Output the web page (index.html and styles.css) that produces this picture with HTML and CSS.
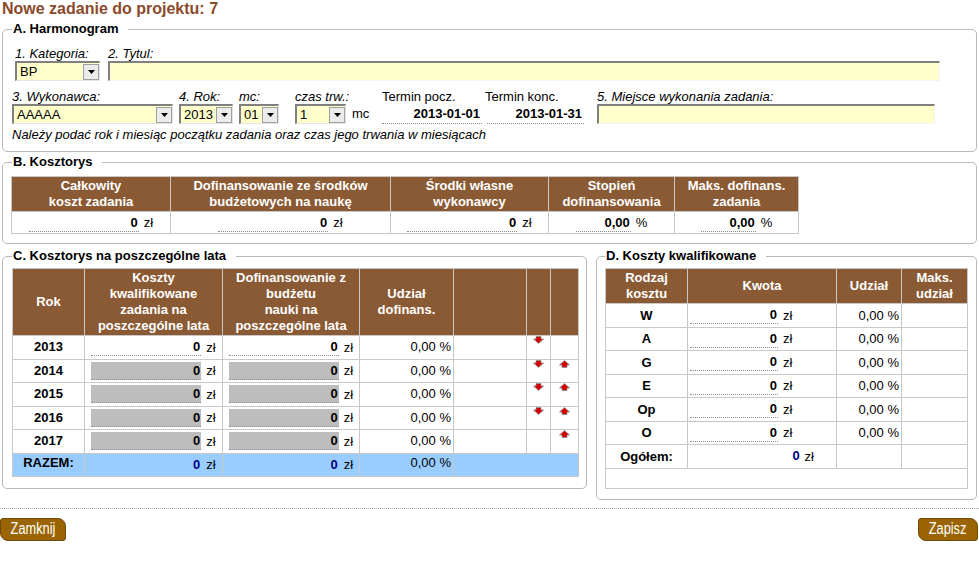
FILE: index.html
```html
<!DOCTYPE html>
<html lang="pl">
<head>
<meta charset="utf-8">
<title>Nowe zadanie do projektu</title>
<link rel="stylesheet" href="styles.css">
</head>
<body>
<div class="page">
  <h1 class="title">Nowe zadanie do projektu: 7</h1>

  <fieldset class="box box-a">
    <legend>A. Harmonogram</legend>
    <div class="row row-1">
      <div class="field f-kat">
        <span class="lbl">1. Kategoria:</span>
        <div class="sel w-kat"><span class="sel-val">BP</span><span class="sel-btn"><svg width="7" height="4" viewBox="0 0 7 4"><path d="M0 0h7L3.5 4z"/></svg></span></div>
      </div>
      <div class="field f-tytul">
        <span class="lbl">2. Tytul:</span>
        <input class="inp w-tytul" type="text">
      </div>
    </div>
    <div class="row row-2">
      <div class="field f-wyk">
        <span class="lbl">3. Wykonawca:</span>
        <div class="sel w-wyk"><span class="sel-val">AAAAA</span><span class="sel-btn"><svg width="7" height="4" viewBox="0 0 7 4"><path d="M0 0h7L3.5 4z"/></svg></span></div>
      </div>
      <div class="field f-rok">
        <span class="lbl">4. Rok:</span>
        <div class="sel w-rok"><span class="sel-val">2013</span><span class="sel-btn"><svg width="7" height="4" viewBox="0 0 7 4"><path d="M0 0h7L3.5 4z"/></svg></span></div>
      </div>
      <div class="field f-mc">
        <span class="lbl">mc:</span>
        <div class="sel w-mc"><span class="sel-val">01</span><span class="sel-btn"><svg width="7" height="4" viewBox="0 0 7 4"><path d="M0 0h7L3.5 4z"/></svg></span></div>
      </div>
      <div class="field f-czas">
        <span class="lbl">czas trw.:</span>
        <div class="ctrl">
          <div class="sel w-czas"><span class="sel-val">1</span><span class="sel-btn"><svg width="7" height="4" viewBox="0 0 7 4"><path d="M0 0h7L3.5 4z"/></svg></span></div>
          <span class="mc-unit">mc</span>
        </div>
      </div>
      <div class="field f-tp">
        <span class="lbl plain">Termin pocz.</span>
        <span class="date w-tp">2013-01-01</span>
      </div>
      <div class="field f-tk">
        <span class="lbl plain">Termin konc.</span>
        <span class="date w-tk">2013-01-31</span>
      </div>
      <div class="field f-miejsce">
        <span class="lbl">5. Miejsce wykonania zadania:</span>
        <input class="inp w-miejsce" type="text">
      </div>
    </div>
    <p class="hint">Należy podać rok i miesiąc początku zadania oraz czas jego trwania w miesiącach</p>
  </fieldset>

  <fieldset class="box box-b">
    <legend>B. Kosztorys</legend>
    <table class="grid grid-b">
      <colgroup>
        <col class="b1"><col class="b2"><col class="b3"><col class="b4"><col class="b5">
      </colgroup>
      <thead>
        <tr>
          <th>Całkowity<br>koszt zadania</th>
          <th>Dofinansowanie ze środków<br>budżetowych na naukę</th>
          <th>Środki własne<br>wykonawcy</th>
          <th>Stopień<br>dofinansowania</th>
          <th>Maks. dofinans.<br>zadania</th>
        </tr>
      </thead>
      <tbody>
        <tr class="b-row">
          <td class="cv"><input class="num w110" value="0" readonly><span class="unit">zł</span></td>
          <td class="cv"><input class="num w110" value="0" readonly><span class="unit">zł</span></td>
          <td class="cv"><input class="num w110" value="0" readonly><span class="unit">zł</span></td>
          <td class="cv"><input class="num w55" value="0,00" readonly><span class="unit">%</span></td>
          <td class="cv"><input class="num w55" value="0,00" readonly><span class="unit">%</span></td>
        </tr>
      </tbody>
    </table>
  </fieldset>

  <div class="cols">
    <fieldset class="box box-c">
      <legend>C. Kosztorys na poszczególne lata</legend>
      <table class="grid grid-c">
        <colgroup>
          <col class="c1"><col class="c2"><col class="c3"><col class="c4"><col class="c5"><col class="c6"><col class="c7">
        </colgroup>
        <thead>
          <tr>
            <th>Rok</th>
            <th>Koszty<br>kwalifikowane<br>zadania na<br>poszczególne lata</th>
            <th>Dofinansowanie z<br>budżetu<br>nauki na<br>poszczególne lata</th>
            <th>Udział<br>dofinans.</th>
            <th></th>
            <th></th>
            <th></th>
          </tr>
        </thead>
        <tbody>
          <tr class="c-row">
            <td class="yr">2013</td>
            <td class="cv"><input class="num w110" value="0" readonly><span class="unit">zł</span></td>
            <td class="cv"><input class="num w110" value="0" readonly><span class="unit">zł</span></td>
            <td class="pct">0,00 %</td>
            <td></td>
            <td class="ar"><svg class="arrow" width="11" height="8" viewBox="0 0 11 8"><path d="M3 0.5h5v2.5h2.5L5.5 7.5 0.5 3H3z"/></svg></td>
            <td class="ar"></td>
          </tr>
          <tr class="c-row">
            <td class="yr">2014</td>
            <td class="cv"><input class="num w110 gray" value="0" readonly><span class="unit">zł</span></td>
            <td class="cv"><input class="num w110 gray" value="0" readonly><span class="unit">zł</span></td>
            <td class="pct">0,00 %</td>
            <td></td>
            <td class="ar"><svg class="arrow" width="11" height="8" viewBox="0 0 11 8"><path d="M3 0.5h5v2.5h2.5L5.5 7.5 0.5 3H3z"/></svg></td>
            <td class="ar"><svg class="arrow" width="11" height="8" viewBox="0 0 11 8"><path d="M3 7.5h5V5h2.5L5.5 0.5 0.5 5H3z"/></svg></td>
          </tr>
          <tr class="c-row">
            <td class="yr">2015</td>
            <td class="cv"><input class="num w110 gray" value="0" readonly><span class="unit">zł</span></td>
            <td class="cv"><input class="num w110 gray" value="0" readonly><span class="unit">zł</span></td>
            <td class="pct">0,00 %</td>
            <td></td>
            <td class="ar"><svg class="arrow" width="11" height="8" viewBox="0 0 11 8"><path d="M3 0.5h5v2.5h2.5L5.5 7.5 0.5 3H3z"/></svg></td>
            <td class="ar"><svg class="arrow" width="11" height="8" viewBox="0 0 11 8"><path d="M3 7.5h5V5h2.5L5.5 0.5 0.5 5H3z"/></svg></td>
          </tr>
          <tr class="c-row">
            <td class="yr">2016</td>
            <td class="cv"><input class="num w110 gray" value="0" readonly><span class="unit">zł</span></td>
            <td class="cv"><input class="num w110 gray" value="0" readonly><span class="unit">zł</span></td>
            <td class="pct">0,00 %</td>
            <td></td>
            <td class="ar"><svg class="arrow" width="11" height="8" viewBox="0 0 11 8"><path d="M3 0.5h5v2.5h2.5L5.5 7.5 0.5 3H3z"/></svg></td>
            <td class="ar"><svg class="arrow" width="11" height="8" viewBox="0 0 11 8"><path d="M3 7.5h5V5h2.5L5.5 0.5 0.5 5H3z"/></svg></td>
          </tr>
          <tr class="c-row">
            <td class="yr">2017</td>
            <td class="cv"><input class="num w110 gray" value="0" readonly><span class="unit">zł</span></td>
            <td class="cv"><input class="num w110 gray" value="0" readonly><span class="unit">zł</span></td>
            <td class="pct">0,00 %</td>
            <td></td>
            <td class="ar"></td>
            <td class="ar"><svg class="arrow" width="11" height="8" viewBox="0 0 11 8"><path d="M3 7.5h5V5h2.5L5.5 0.5 0.5 5H3z"/></svg></td>
          </tr>
          <tr class="c-row total">
            <td class="yr">RAZEM:</td>
            <td class="cv"><input class="num w110 plainnum" value="0" readonly><span class="unit">zł</span></td>
            <td class="cv"><input class="num w110 plainnum" value="0" readonly><span class="unit">zł</span></td>
            <td class="pct">0,00 %</td>
            <td colspan="3"></td>
          </tr>
        </tbody>
      </table>
    </fieldset>

    <fieldset class="box box-d">
      <legend>D. Koszty kwalifikowane</legend>
      <table class="grid grid-d">
        <colgroup>
          <col class="d1"><col class="d2"><col class="d3"><col class="d4">
        </colgroup>
        <thead>
          <tr>
            <th>Rodzaj<br>kosztu</th>
            <th>Kwota</th>
            <th>Udział</th>
            <th>Maks.<br>udział</th>
          </tr>
        </thead>
        <tbody>
          <tr class="d-row"><td class="kind">W</td><td class="kw"><input class="num w88" value="0" readonly><span class="unit">zł</span></td><td class="pct">0,00 %</td><td></td></tr>
          <tr class="d-row"><td class="kind">A</td><td class="kw"><input class="num w88" value="0" readonly><span class="unit">zł</span></td><td class="pct">0,00 %</td><td></td></tr>
          <tr class="d-row"><td class="kind">G</td><td class="kw"><input class="num w88" value="0" readonly><span class="unit">zł</span></td><td class="pct">0,00 %</td><td></td></tr>
          <tr class="d-row"><td class="kind">E</td><td class="kw"><input class="num w88" value="0" readonly><span class="unit">zł</span></td><td class="pct">0,00 %</td><td></td></tr>
          <tr class="d-row"><td class="kind">Op</td><td class="kw"><input class="num w88" value="0" readonly><span class="unit">zł</span></td><td class="pct">0,00 %</td><td></td></tr>
          <tr class="d-row"><td class="kind">O</td><td class="kw"><input class="num w88" value="0" readonly><span class="unit">zł</span></td><td class="pct">0,00 %</td><td></td></tr>
          <tr class="d-row"><td class="kind">Ogółem:</td><td class="kw-total"><span class="blue">0</span><span class="unit">zł</span></td><td></td><td></td></tr>
          <tr class="d-empty"><td colspan="4"></td></tr>
        </tbody>
      </table>
    </fieldset>
  </div>

  <div class="sep"></div>

  <div class="actions">
    <button class="btn btn-close" type="button"><span class="btn-txt">Zamknij</span></button>
    <button class="btn btn-save" type="button"><span class="btn-txt">Zapisz</span></button>
  </div>
</div>
</body>
</html>
```

FILE: styles.css
```css
* { box-sizing: border-box; }
html, body { margin: 0; padding: 0; background: #fff; }
body {
  font-family: "Liberation Sans", Arial, sans-serif;
  font-size: 13px;
  color: #000;
}
.page { width: 979px; }

.title {
  margin: 0 0 0 2px;
  height: 21px;
  font-size: 16px;
  line-height: 18px;
  font-weight: bold;
  color: #8b4a2b;
}

/* fieldsets */
.box {
  margin: 0 2px;
  border: 1px solid #b8b8b8;
  border-radius: 5px;
  padding: 0 9px;
  min-width: 0;
}
.box legend {
  font-weight: bold;
  font-size: 13px;
  line-height: 16px;
  padding: 0 10px 0 1px;
}
.box-a { padding-top: 9px; padding-bottom: 9px; }
.box-b { margin-top: 2px; padding-top: 6px; padding-bottom: 9px; }

.row { display: flex; align-items: flex-start; }
.row-1 { margin-left: 3px; }
.row-2 { margin-top: 8px; }
.field { display: flex; flex-direction: column; }
.lbl { display: block; font-style: italic; line-height: 15px; white-space: nowrap; }
.lbl.plain { font-style: normal; }

.f-kat { margin-right: 8px; }
.f-wyk { margin-right: 6px; }
.f-rok { margin-right: 6px; }
.f-mc { margin-right: 16px; }
.f-czas { width: 87px; }
.f-tk { margin-left: 3px; }
.f-miejsce { margin-left: 13px; }

.sel {
  display: flex;
  align-items: center;
  height: 20px;
  border-style: solid;
  border-width: 2px 1px 1px 2px;
  border-color: #808080 #e4e4e4 #e4e4e4 #808080;
  background: #ffffcc;
}
.sel-val { flex: 1; padding-left: 3px; line-height: 16px; white-space: nowrap; }
.sel-btn {
  width: 16px;
  height: 16px;
  display: flex;
  align-items: center;
  justify-content: center;
  background: #ececec;
  border: 1px solid #a0a0a0;
}
.sel-btn svg { display: block; fill: #000; }
.w-kat { width: 85px; }
.w-wyk { width: 161px; }
.w-rok { width: 54px; }
.w-mc { width: 40px; }
.w-czas { width: 51px; }

.ctrl { display: flex; align-items: center; }
.mc-unit { margin-left: 6px; line-height: 20px; }

.inp {
  display: block;
  height: 20px;
  margin: 0;
  padding: 0 3px;
  border-style: solid;
  border-width: 2px 1px 1px 2px;
  border-color: #808080 #f4f4f4 #f4f4f4 #808080;
  background: #ffffcc;
  font: inherit;
}
.w-tytul { width: 832px; }
.w-miejsce { width: 338px; }

.date {
  display: block;
  height: 20px;
  line-height: 19px;
  text-align: right;
  font-weight: bold;
  border-bottom: 1px dotted #8a8a8a;
  padding-right: 2px;
}
.w-tp { width: 100px; }
.w-tk { width: 97px; margin-left: 2px; }

.hint { margin: 3px 0 0; font-style: italic; line-height: 15px; }

/* tables */
.grid { border-collapse: collapse; table-layout: fixed; }
.grid th, .grid td { border: 1px solid #c8c8c8; }
.grid th {
  background: #8a5a34;
  color: #fff;
  font-weight: bold;
  line-height: 16px;
  padding: 1px 2px;
  text-align: center;
  vertical-align: middle;
}
.grid td { padding: 0 2px; white-space: nowrap; }

.num {
  display: inline-block;
  vertical-align: middle;
  height: 18px;
  margin: 0;
  padding: 0 1px;
  border: 0;
  border-bottom: 1px dotted #8a8a8a;
  background: transparent;
  font: bold 13px "Liberation Sans", Arial, sans-serif;
  color: #000;
  text-align: right;
  outline: none;
}
.num.gray { background: #bdbdbd; }
.num.plainnum { border-bottom-color: transparent; color: #000080; }
.w110 { width: 110px; }
.w88 { width: 88px; }
.w55 { width: 55px; }
.unit { display: inline-block; vertical-align: middle; margin-left: 5px; }

.cv { text-align: center; }
.pct { text-align: right; padding-right: 6px; }

/* B */
.grid-b { width: 787px; margin-left: -1px; }
.b1 { width: 159px; }
.b2 { width: 220px; }
.b3 { width: 158px; }
.b4 { width: 126px; }
.b5 { width: 124px; }
.b-row td { height: 22px; }

/* C & D */
.cols {
  display: flex;
  align-items: flex-start;
  gap: 9px;
  margin: 4px 2px 0;
}
.cols .box { margin: 0; }
.box-c { width: 585px; padding-top: 4px; padding-bottom: 11px; }
.box-d { width: 381px; padding: 4px 8px 10px; }

.grid-c { width: 566px; margin-left: 0; }
.c1 { width: 72px; }
.c2 { width: 138px; }
.c3 { width: 137px; }
.c4 { width: 94px; }
.c5 { width: 73px; }
.c6 { width: 24px; }
.c7 { width: 28px; }
.c-row td { height: 23.5px; vertical-align: middle; }
.c-row td.yr, .c-row td.pct { vertical-align: top; padding-top: 3px; line-height: 15px; }
.yr { text-align: center; font-weight: bold; }
.ar { text-align: center; vertical-align: top !important; padding: 4px 0 0; }
.arrow { display: block; margin: 0 auto; fill: #d40000; stroke: #8e8e8e; stroke-width: 0.8; }
.total td { background: #99ccff; }
.total td.yr { padding-top: 1px; }
.total td.pct { padding-top: 1px; }

.grid-d { width: 362px; }
.d1 { width: 82px; }
.d2 { width: 149px; }
.d3 { width: 65px; }
.d4 { width: 66px; }
.d-row td { height: 23.5px; vertical-align: middle; }
.kind { text-align: center; font-weight: bold; }
.kw { padding-left: 2px; }
.kw-total { text-align: right; padding-right: 22px !important; font-weight: bold; }
.kw-total .unit { font-weight: normal; }
.blue { color: #000080; }
.d-empty td { height: 20px; }

/* footer */
.sep { margin-top: 8px; border-top: 1px dotted #a0a0a0; }
.actions {
  display: flex;
  justify-content: space-between;
  margin-top: 9px;
  padding-right: 1px;
}
.btn {
  height: 23px;
  margin: 0;
  padding: 0;
  background: #9a6500;
  color: #fff;
  border: 1px solid #6e4a0c;
  border-radius: 3px 8px 3px 8px;
  font-family: "Liberation Sans", Arial, sans-serif;
  font-size: 16px;
  line-height: 20px;
  cursor: pointer;
}
.btn-txt { display: inline-block; transform: scaleX(0.8); }
.btn-close { width: 66px; }
.btn-save { width: 60px; }
```
